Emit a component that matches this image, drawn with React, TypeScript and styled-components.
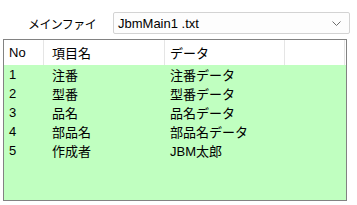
import { createGlobalStyle, styled } from "styled-components";

const GlobalStyle = createGlobalStyle`
  html, body {
    margin: 0;
    padding: 0;
    background: #ffffff;
  }
  body {
    font-family: "Liberation Sans", "Noto Sans CJK JP", sans-serif;
    color: #000000;
  }
`;

interface Row {
  no: number;
  name: string;
  data: string;
}

const rows: Row[] = [
  { no: 1, name: "注番", data: "注番データ" },
  { no: 2, name: "型番", data: "型番データ" },
  { no: 3, name: "品名", data: "品名データ" },
  { no: 4, name: "部品名", data: "部品名データ" },
  { no: 5, name: "作成者", data: "JBM太郎" },
];

const columns = [
  { title: "No", width: 40, pad: 5 },
  { title: "項目名", width: 121, pad: 8 },
  { title: "データ", width: 120, pad: 5 },
  { title: "", width: 60, pad: 5 },
];

export default function App() {
  return (
    <>
      <GlobalStyle />
      <Page>
        <FileRow>
          <Label>メインファイ</Label>
          <Combo>
            <span>JbmMain1 .txt</span>
            <svg width="9" height="5" viewBox="0 0 9 5">
              <polyline
                points="0.5,0.5 4.5,4.5 8.5,0.5"
                fill="none"
                stroke="#6d6d6d"
                strokeWidth="1"
              />
            </svg>
          </Combo>
        </FileRow>
        <ListView>
          <HeaderRow>
            {columns.map((c, i) => (
              <HeaderCell key={i} $width={c.width} $pad={c.pad}>
                {c.title}
              </HeaderCell>
            ))}
          </HeaderRow>
          {rows.map((r) => (
            <DataRow key={r.no}>
              <Cell $width={columns[0].width} $pad={columns[0].pad}>
                {r.no}
              </Cell>
              <Cell $width={columns[1].width} $pad={columns[1].pad}>
                {r.name}
              </Cell>
              <Cell $width={columns[2].width} $pad={columns[2].pad}>
                {r.data}
              </Cell>
            </DataRow>
          ))}
        </ListView>
      </Page>
    </>
  );
}

const Page = styled.div`
  width: 357px;
  height: 205px;
  padding: 12px 0 0 3px;
  box-sizing: border-box;
`;

const FileRow = styled.div`
  display: flex;
  align-items: center;
  height: 22px;
`;

const Label = styled.div`
  width: 110px;
  padding-left: 25px;
  box-sizing: border-box;
  font-size: 12px;
  letter-spacing: -0.6px;
`;

const Combo = styled.div`
  width: 237px;
  height: 22px;
  box-sizing: border-box;
  border: 1px solid #d3d3d3;
  border-radius: 2px;
  background: #fdfdfd;
  display: flex;
  align-items: center;
  justify-content: space-between;
  padding: 0 8px 0 4px;
  font-size: 13px;

  svg {
    display: block;
  }
`;

const ListView = styled.div`
  margin-top: 5px;
  width: 344px;
  height: 162px;
  box-sizing: border-box;
  border: 1px solid #828282;
  background: #c0ffc0;
  overflow: hidden;
`;

const HeaderRow = styled.div`
  display: flex;
  height: 25px;
  background: #ffffff;
`;

const HeaderCell = styled.div<{ $width: number; $pad: number }>`
  width: ${(p) => p.$width}px;
  flex: none;
  box-sizing: border-box;
  padding-left: ${(p) => p.$pad}px;
  border-right: 1px solid #e5e5e5;
  display: flex;
  align-items: center;
  font-size: 13px;
`;

const DataRow = styled.div`
  display: flex;
  height: 19px;
  align-items: center;
`;

const Cell = styled.div<{ $width: number; $pad: number }>`
  width: ${(p) => p.$width}px;
  flex: none;
  box-sizing: border-box;
  padding-left: ${(p) => p.$pad}px;
  font-size: 13px;
  white-space: nowrap;
`;
